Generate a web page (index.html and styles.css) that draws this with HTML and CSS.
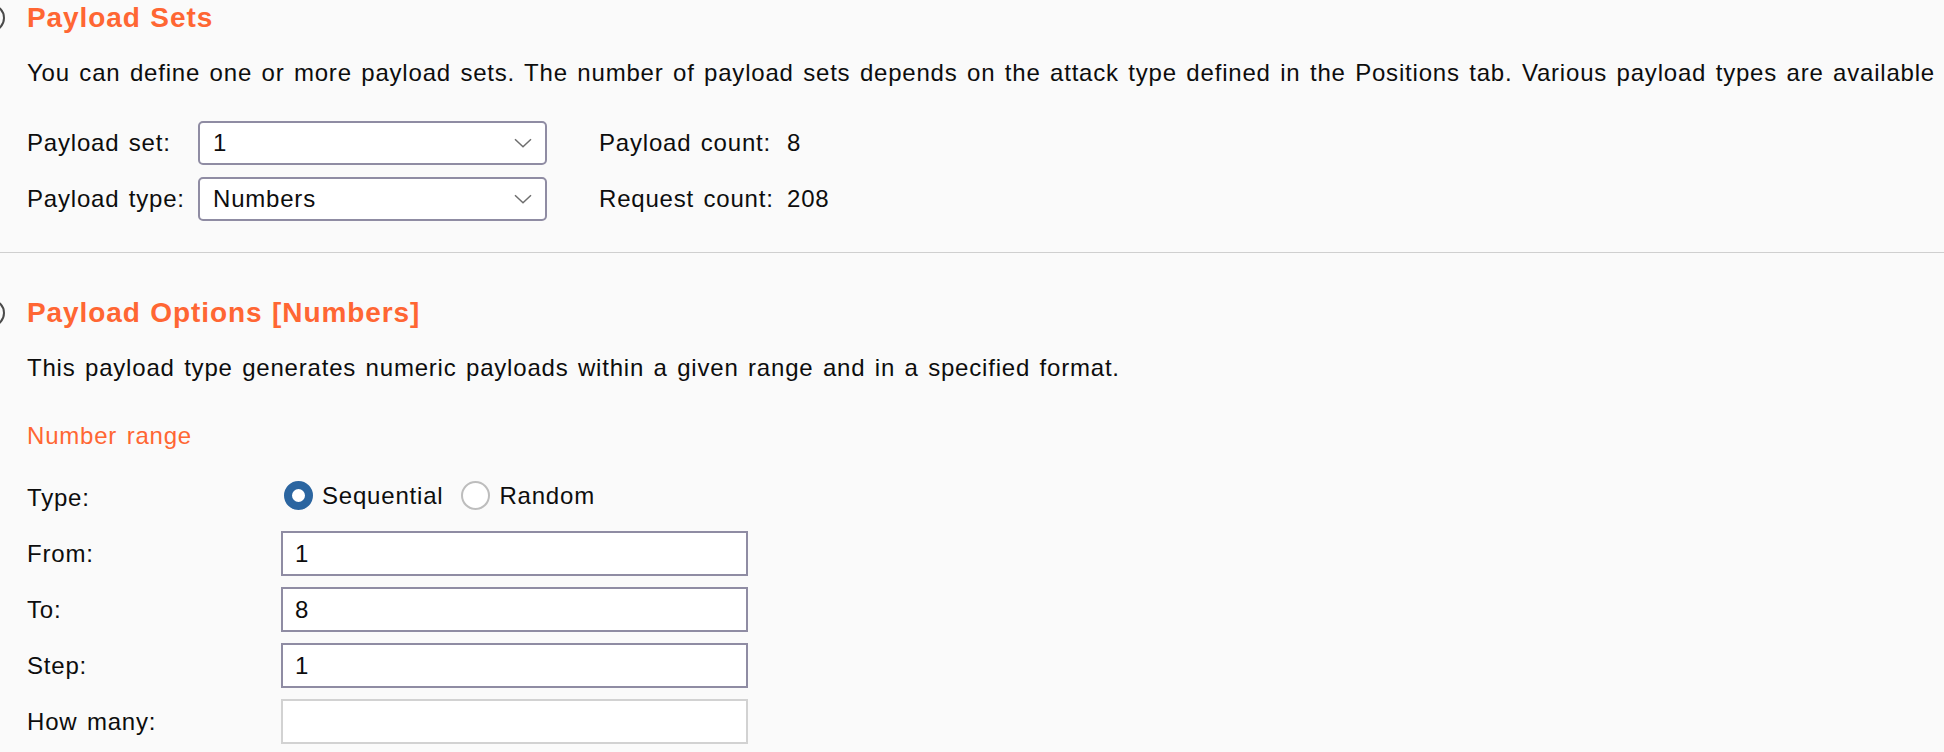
FILE: index.html
```html
<!DOCTYPE html>
<html lang="en">
<head>
<meta charset="utf-8">
<title>Payloads</title>
<link rel="stylesheet" href="styles.css">
</head>
<body>
<main class="page">
  <section class="panel panel-sets">
    <div class="panel-head">
      <span class="toggle"></span>
      <h2 class="panel-title">Payload Sets</h2>
    </div>
    <p class="desc">You can define one or more payload sets. The number of payload sets depends on the attack type defined in the Positions tab. Various payload types are available</p>
    <div class="set-grid">
      <span class="label">Payload set:</span>
      <div class="select"><span>1</span><svg class="chev" width="18" height="10" viewBox="0 0 18 10"><path d="M1 1.2 L9 8.8 L17 1.2" fill="none" stroke="#6e6e6e" stroke-width="1.5"/></svg></div>
      <span class="count-label">Payload count:</span>
      <span class="count-value">8</span>

      <span class="label">Payload type:</span>
      <div class="select"><span>Numbers</span><svg class="chev" width="18" height="10" viewBox="0 0 18 10"><path d="M1 1.2 L9 8.8 L17 1.2" fill="none" stroke="#6e6e6e" stroke-width="1.5"/></svg></div>
      <span class="count-label">Request count:</span>
      <span class="count-value">208</span>
    </div>
  </section>

  <hr class="divider">

  <section class="panel panel-options">
    <div class="panel-head">
      <span class="toggle"></span>
      <h2 class="panel-title">Payload Options [Numbers]</h2>
    </div>
    <p class="desc">This payload type generates numeric payloads within a given range and in a specified format.</p>
    <h3 class="subhead">Number range</h3>
    <div class="range-grid">
      <span class="label">Type:</span>
      <div class="radios">
        <span class="radio radio-on"></span><span class="radio-text">Sequential</span>
        <span class="radio radio-off"></span><span class="radio-text">Random</span>
      </div>

      <span class="label">From:</span>
      <div class="field">1</div>

      <span class="label">To:</span>
      <div class="field">8</div>

      <span class="label">Step:</span>
      <div class="field">1</div>

      <span class="label">How many:</span>
      <div class="field field-disabled"></div>
    </div>
  </section>
</main>
</body>
</html>
```

FILE: styles.css
```css
html, body {
  margin: 0;
  padding: 0;
  overflow: hidden;
}

body {
  background: #fafafa;
  color: #0d0d0d;
  font-family: "Liberation Sans", Arial, Helvetica, sans-serif;
  font-size: 24px;
  letter-spacing: 0.8px;
  word-spacing: 2px;
  width: 1944px;
  height: 752px;
}

.page {
  display: flex;
  flex-direction: column;
}

.panel {
  padding-left: 27px;
}

.panel-sets {
  padding-top: 1px;
}

.panel-head {
  display: flex;
  align-items: center;
  height: 34px;
}

.toggle {
  flex: none;
  width: 28px;
  height: 28px;
  box-sizing: border-box;
  border: 2px solid #4a4a4a;
  border-radius: 50%;
  margin-left: -50px;
  margin-right: 22px;
}

.panel-title {
  margin: 0;
  font-size: 28px;
  line-height: 34px;
  font-weight: bold;
  color: #ff6633;
  letter-spacing: 0.9px;
  word-spacing: 1px;
}

.desc {
  margin: 23px 0 0;
  line-height: 30px;
  white-space: nowrap;
}

.set-grid {
  margin-top: 33px;
  display: grid;
  grid-template-columns: 171px 349px 240px 1fr;
  grid-auto-rows: 44px;
  row-gap: 12px;
  align-items: center;
}

.label {
  white-space: nowrap;
}

.select {
  height: 44px;
  box-sizing: border-box;
  border: 2px solid #8f8ca3;
  border-radius: 5px;
  background: #fff;
  padding: 0 13px;
  display: flex;
  align-items: center;
  justify-content: space-between;
}

.count-label {
  padding-left: 52px;
  white-space: nowrap;
}

.divider {
  margin: 31px 0 0;
  border: 0;
  border-top: 1px solid #cfcfcf;
  height: 0;
}

.panel-options {
  padding-top: 43px;
}

.subhead {
  margin: 38px 0 0;
  font-size: 24px;
  line-height: 30px;
  font-weight: normal;
  color: #ff6633;
}

.range-grid {
  margin-top: 24px;
  display: grid;
  grid-template-columns: 254px 467px;
  grid-auto-rows: 45px;
  row-gap: 11px;
  align-items: center;
}

.radios {
  display: flex;
  align-items: center;
  margin-left: 3px;
  margin-top: -4px;
}

.radio {
  flex: none;
  width: 29px;
  height: 29px;
  box-sizing: border-box;
  border-radius: 50%;
  background: #fff;
}

.radio-on {
  border: 8px solid #2b65a0;
}

.radio-off {
  border: 2px solid #bdbdbd;
  margin-left: 18px;
}

.radio-text {
  margin-left: 9px;
}

.field {
  height: 45px;
  box-sizing: border-box;
  border: 2px solid #8f8ca3;
  background: #fff;
  padding: 0 12px;
  display: flex;
  align-items: center;
}

.field-disabled {
  border-color: #d2d2d2;
}
```
